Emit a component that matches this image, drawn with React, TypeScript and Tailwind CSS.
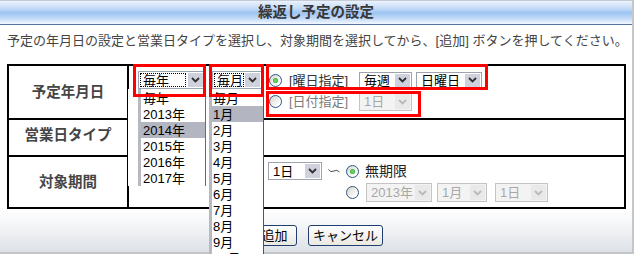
import React from "react";

const F = "font-['Liberation_Sans','Noto_Sans_CJK_JP',sans-serif]";

function Chevron({ disabled }: { disabled?: boolean }) {
  return (
    <svg width="9" height="6" viewBox="0 0 9 6" className="block">
      <path
        d="M1 1 L4.5 4.5 L8 1"
        fill="none"
        stroke={disabled ? "#b9b9b9" : "#2f2f2f"}
        strokeWidth="1.8"
      />
    </svg>
  );
}

function Sel({
  text,
  className,
  disabled,
  focus,
}: {
  text: string;
  className: string;
  disabled?: boolean;
  focus?: boolean;
}) {
  return (
    <div
      className={`flex shrink-0 border ${
        disabled
          ? "border-[#c4c4c4] bg-[#f3f3f3] text-[#a8a8a8]"
          : "border-[#9ea4ad] bg-white text-black"
      } ${className}`}
    >
      <div className="flex-1 flex items-stretch p-[1px] min-w-0">
        <div
          className={`flex-1 flex items-center text-[13px] leading-none whitespace-nowrap ${
            focus ? "border border-dotted border-black pl-[2px]" : "pl-[3px]"
          }`}
        >
          {text}
        </div>
      </div>
      <div
        className={`w-[15px] m-[1px] flex items-center justify-center ${
          disabled ? "bg-[#e9e9e9]" : "bg-[#cfd1dc]"
        }`}
      >
        <Chevron disabled={disabled} />
      </div>
    </div>
  );
}

function Radio({ checked }: { checked?: boolean }) {
  return (
    <div className="w-[13px] h-[13px] shrink-0 rounded-full border border-[#2c5785] bg-[linear-gradient(135deg,#d4d4cc_0%,#ffffff_80%)] flex items-center justify-center">
      {checked && (
        <div className="w-[5px] h-[5px] rounded-full bg-[radial-gradient(circle,#7be27b,#1f9a1f)]" />
      )}
    </div>
  );
}

function Label({ children, extra }: { children: React.ReactNode; extra?: string }) {
  return (
    <div
      className={`w-[120px] shrink-0 border-r-2 border-black flex items-center justify-center text-[14.5px] font-bold text-[#454545] leading-none ${extra ?? ""}`}
    >
      {children}
    </div>
  );
}

export default function App() {
  const years = ["毎年", "2013年", "2014年", "2015年", "2016年", "2017年"];
  const months = ["毎月", "1月", "2月", "3月", "4月", "5月", "6月", "7月", "8月", "9月", "10月"];
  return (
    <div
      className={`relative w-[634px] h-[254px] bg-white border-r-2 border-b-2 border-[#c3c6ca] ${F}`}
    >
      {/* title bar */}
      <div className="h-[25px] border-t border-b border-t-[#c6cbd3] border-b-[#56749c] bg-[linear-gradient(to_bottom,#eaf2fd_0%,#c8ddf8_30%,#9ec4f2_52%,#c6dcf8_78%,#f3f8fe_100%)] flex items-center justify-center text-[14.5px] font-bold text-[#383838] leading-none">
        繰返し予定の設定
      </div>

      {/* instruction */}
      <div className="h-[39px] pl-[7px] pt-[8px] text-[13px] leading-[15px] text-[#444] whitespace-nowrap">
        予定の年月日の設定と営業日タイプを選択し、対象期間を選択してから、[追加] ボタンを押してください。
      </div>

      {/* table */}
      <div className="ml-[7px] w-[619px] border-2 border-black">
        {/* row 1 */}
        <div className="flex h-[52px]">
          <Label>予定年月日</Label>
          <div className="flex-1 flex items-start pl-[9px] pt-[5px]">
            <Sel text="毎年" focus className="w-[67px] h-[18px]" />
            <Sel text="毎月" focus className="ml-[7px] w-[50px] h-[18px]" />
            <div className="ml-[4px] flex flex-col">
              <div className="h-[18px] flex items-center pl-[3px]">
                <Radio checked />
                <span className="ml-[7px] w-[66px] text-[13px] leading-none text-[#333] whitespace-nowrap">
                  [曜日指定]
                </span>
                <Sel text="毎週" className="ml-[4px] w-[53px] h-[17px]" />
                <Sel text="日曜日" className="ml-[4px] w-[66px] h-[17px]" />
              </div>
              <div className="mt-[3px] h-[19px] flex items-center pl-[3px]">
                <Radio />
                <span className="ml-[7px] w-[66px] text-[13px] leading-none text-[#7c7c7c] whitespace-nowrap">
                  [日付指定]
                </span>
                <Sel text="1日" disabled className="ml-[4px] w-[53px] h-[19px]" />
              </div>
            </div>
          </div>
        </div>

        {/* row 2 */}
        <div className="flex h-[37px] border-t-2 border-black">
          <Label extra="pb-[5px]">営業日タイプ</Label>
          <div className="flex-1" />
        </div>

        {/* row 3 */}
        <div className="flex h-[52px] border-t-2 border-black">
          <Label>対象期間</Label>
          <div className="flex-1 flex items-start pl-[9px] pt-[5px]">
            <div className="w-[130px] h-[18px] shrink-0" />
            <Sel text="1日" className="w-[54px] h-[18px]" />
            <div className="ml-[6px] h-[18px] flex items-center">
              <svg width="12" height="6" viewBox="0 0 12 6" className="block">
                <path d="M0.5 1.5 Q2.5 5 6 3 Q9 1 11.5 4" fill="none" stroke="#505050" strokeWidth="1" />
              </svg>
            </div>
            <div className="ml-[6px] flex flex-col">
              <div className="h-[18px] flex items-center">
                <Radio checked />
                <span className="ml-[6px] text-[14px] leading-none text-[#222] whitespace-nowrap">無期限</span>
              </div>
              <div className="mt-[3px] h-[19px] flex items-center">
                <Radio />
                <Sel text="2013年" disabled className="ml-[7px] w-[66px] h-[19px]" />
                <Sel text="1月" disabled className="ml-[5px] w-[50px] h-[19px]" />
                <Sel text="1日" disabled className="ml-[8px] w-[53px] h-[19px]" />
              </div>
            </div>
          </div>
        </div>
      </div>

      {/* bottom panel */}
      <div className="h-[43px] bg-[linear-gradient(to_bottom,#ffffff_0%,#f4f5f7_40%,#dde1e6_100%)] flex justify-center items-start pt-[16px] pl-[3px] gap-[11px]">
        <button className="h-[21px] w-[45px] rounded-[3px] border border-[#1f3f72] bg-[linear-gradient(to_bottom,#ffffff,#ebe8e2)] text-[13px] leading-none text-black">
          追加
        </button>
        <button className="h-[21px] w-[75px] rounded-[3px] border border-[#1f3f72] bg-[linear-gradient(to_bottom,#ffffff,#ebe8e2)] text-[13px] leading-none text-black">
          キャンセル
        </button>
      </div>

      {/* year dropdown list */}
      <div className="absolute left-[128px] top-[89px] w-[81px] h-[97px] bg-white z-10">
        <div className="absolute left-[10px] top-0 bottom-0 w-[68px] border-l-[3px] border-l-[#b7b9c1] border-r border-r-[#6a6a6a] pt-[1px]">
          {years.map((y) => (
            <div
              key={y}
              className={`h-[16px] pl-[2px] flex items-center text-[13px] leading-none text-black ${
                y === "2014年" ? "bg-[#b3b5c1]" : ""
              }`}
            >
              {y}
            </div>
          ))}
        </div>
      </div>

      {/* month dropdown list */}
      <div className="absolute left-[209px] top-[89px] w-[55px] h-[166px] bg-white z-10 border-l-[3px] border-l-[#b7b9c1] border-r border-r-[#555] pt-[1px] overflow-hidden">
        {months.map((m) => (
          <div
            key={m}
            className={`h-[16px] shrink-0 pl-[1px] flex items-center text-[13px] leading-none text-black ${
              m === "1月" ? "bg-[#b3b5c1]" : ""
            }`}
          >
            {m}
          </div>
        ))}
      </div>

      {/* red annotation boxes */}
      <div className="absolute left-[133px] top-[64px] w-[73px] h-[33px] border-[3px] border-[#ff0000] z-20" />
      <div className="absolute left-[209px] top-[64px] w-[55px] h-[33px] border-[3px] border-[#ff0000] z-20" />
      <div className="absolute left-[266px] top-[64px] w-[222px] h-[26px] border-[3px] border-[#ff0000] z-20" />
      <div className="absolute left-[266px] top-[91px] w-[155px] h-[26px] border-[3px] border-[#ff0000] z-20" />
    </div>
  );
}
